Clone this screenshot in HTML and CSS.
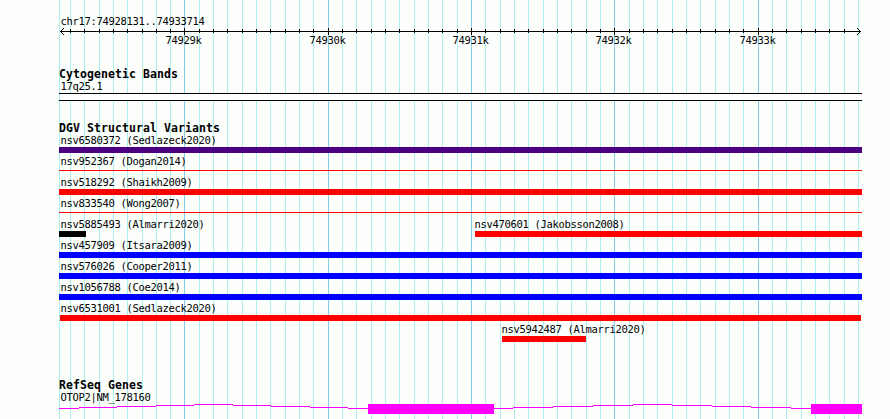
FILE: index.html
```
<!DOCTYPE html>
<html lang="en">
<head>
    <meta charset="utf-8">
    <title>chr17:74928131..74933714</title>
    <link rel="stylesheet" href="styles.css">
</head>
<body>
    <svg class="browser" width="890" height="419" shape-rendering="crispEdges">
        <g id="grid"></g>

        <!-- Scale -->
        <text class="label" x="60.5" y="25">chr17:74928131..74933714</text>
        <path class="axis" d="M60 31.5H861"/>
        <path class="pixels" d="M61 30h1v1h-1zM62 29h1v1h-1zM63 28h1v1h-1zM61 32h1v1h-1zM62 33h1v1h-1zM63 34h1v1h-1z"/>
        <path class="pixels" d="M859 30h1v1h-1zM858 29h1v1h-1zM857 28h1v1h-1zM859 32h1v1h-1zM858 33h1v1h-1zM857 34h1v1h-1z"/>
        <g id="ticks"></g>

        <!-- Cytogenetic bands -->
        <text class="title" x="59" y="78">Cytogenetic Bands</text>
        <text class="label" x="60.5" y="90">17q25.1</text>
        <rect class="band" x="59.5" y="93.5" width="802" height="7"/>
        <path class="axis" d="M59 93.5H862M59 100.5H862"/>

        <!-- Structural variants -->
        <text class="title" x="59" y="132">DGV Structural Variants</text>
        <g id="variants"></g>

        <!-- Genes -->
        <text class="title" x="59" y="389">RefSeq Genes</text>
        <text class="label" x="60.5" y="401">OTOP2|NM_178160</text>
        <path class="intron" d="M59 408.5H79M79 407.5H117M117 406.5H156M156 405.5H194M194 404.5H233M233 405.5H271M271 406.5H310M310 407.5H348M348 408.5H368"/>
        <path class="intron" d="M494 408.5H513M513 407.5H553M553 406.5H593M593 405.5H633M633 404.5H672M672 405.5H712M712 406.5H751M751 407.5H791M791 408.5H811"/>
        <rect class="exon" x="368" y="404" width="126" height="10"/>
        <rect class="exon" x="811" y="404" width="51" height="10"/>
    </svg>

    <script>
        // name, start, end, row, type
        const variants = [
            ['nsv6580372 (Sedlazeck2020)', 59, 862, 0, 'complex'],
            ['nsv952367 (Dogan2014)', 59, 862, 1, 'thin'],
            ['nsv518292 (Shaikh2009)', 59, 862, 2, 'loss'],
            ['nsv833540 (Wong2007)', 59, 862, 3, 'thin'],
            ['nsv5885493 (Almarri2020)', 59, 86, 4, 'other'],
            ['nsv470601 (Jakobsson2008)', 475, 862, 4, 'loss'],
            ['nsv457909 (Itsara2009)', 59, 862, 5, 'gain'],
            ['nsv576026 (Cooper2011)', 59, 862, 6, 'gain'],
            ['nsv1056788 (Coe2014)', 59, 862, 7, 'gain'],
            ['nsv6531001 (Sedlazeck2020)', 60, 861, 8, 'loss'],
            ['nsv5942487 (Almarri2020)', 502, 586, 9, 'loss']
        ];
        const rowHeight = 21;

        let grid = '<rect class="minor" x="59" y="0" width="1" height="419"/>';
        let ticks = '';
        for (let i = -8; i <= 47; i++) {
            const x = Math.floor(184.99 + i * 14.33);
            const major = i % 10 === 0;
            grid += `<rect class="${major ? 'major' : 'minor'}" x="${x}" y="0" width="1" height="419"/>`;
            if (i < 47) {
                ticks += `<rect x="${x}" y="${major ? 28 : 29}" width="1" height="${major ? 7 : 4}"/>`;
            }
            if (major) {
                ticks += `<text class="label" x="${x - 18.5}" y="44">${74929 + i / 10}k</text>`;
            }
        }
        document.getElementById('grid').innerHTML = grid;
        document.getElementById('ticks').innerHTML = ticks;

        document.getElementById('variants').innerHTML = variants.map(([name, start, end, row, type]) => {
            const top = 147 + row * rowHeight;
            const thin = type === 'thin';
            const textX = start < 61 ? 60.5 : start - 0.5;
            return `<text class="label" x="${textX}" y="${top - 3}">${name}</text>
                <rect class="${type}" x="${start}" y="${thin ? top + 2 : top}" width="${end - start}" height="${thin ? 1 : 6}"/>`;
        }).join('');
    </script>
</body>
</html>
```
FILE: styles.css
```
body {
    margin: 0;
    background-color: #fdfffc;
}
.browser {
    display: block;
}
.label {
    font-family: "DejaVu Sans Mono", monospace;
    font-size: 10.5px;
    letter-spacing: -0.32px;
}
.title {
    font-family: "DejaVu Sans Mono", monospace;
    font-size: 11.5px;
    font-weight: bold;
    letter-spacing: 0.08px;
}
.minor {
    fill: #afeeee;
}
.major {
    fill: #87ceeb;
}
.axis {
    stroke: #000000;
}
.band {
    fill: #ffffff;
}
.complex {
    fill: #4b0082;
}
.loss, .thin {
    fill: #ff0000;
}
.gain {
    fill: #0000ff;
}
.other {
    fill: #000000;
}
.intron {
    stroke: #ff00ff;
}
.exon {
    fill: #ff00ff;
}
```
